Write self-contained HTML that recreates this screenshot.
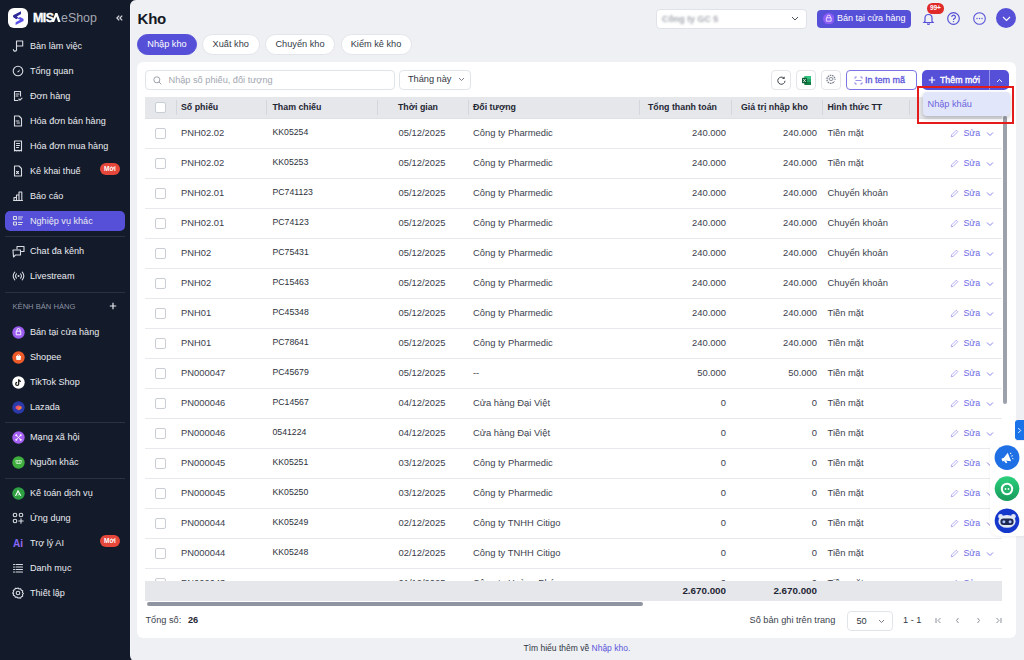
<!DOCTYPE html>
<html><head><meta charset="utf-8"><style>
*{box-sizing:border-box;margin:0;padding:0}
svg{display:block}
html,body{width:1024px;height:660px;overflow:hidden;background:#131a29;font-family:"Liberation Sans", sans-serif;}
.a{position:absolute;white-space:nowrap}
.nav{position:absolute;left:0;width:130px;height:20px;}
.nav .ic{position:absolute;left:12px;top:4.6px;width:13px;height:13px}
.nav .t{position:absolute;left:30px;top:0.7px;line-height:20px;font-size:9.1px;color:#e9ebf0}
.sep{position:absolute;left:5px;width:120px;height:1px;background:#2a3142}
.badge{position:absolute;left:100px;width:20px;height:12px;border-radius:6px;background:#e5483a;color:#fff;font-size:6.5px;font-weight:700;text-align:center;line-height:12px}
.main{position:absolute;left:130px;top:0;width:894px;height:663px;background:#eef0f4;border-radius:6px 0 0 8px;border-left:1px solid #f5f6fa}
.pill{position:absolute;top:34px;height:21px;border-radius:10.5px;background:#fff;border:1px solid #e3e5ea;font-size:9.2px;color:#333a46;text-align:center;line-height:18.4px}
.card{position:absolute;left:137px;top:62px;width:879px;height:576px;background:#fff;border-radius:6px}
.ibtn{position:absolute;top:70px;width:19.5px;height:19.5px;border:1px solid #e3e5ea;border-radius:4px;background:#fff}
.hd{position:absolute;top:97px;height:21px;font-size:8.8px;font-weight:700;color:#1f2633;line-height:21px}
.vs{position:absolute;top:100px;width:1px;height:15px;background:#d3d6dc}
.row{position:absolute;left:145px;width:857px;height:30px;border-bottom:1px solid #e7e9ed}
.c{position:absolute;top:0;line-height:28px;font-size:9.4px;color:#3b414d}
.cb{position:absolute;left:10px;top:9.3px;width:10.5px;height:10.5px;border:1px solid #c9cdd4;border-radius:2px;background:#fff}
.r{text-align:right}
</style></head><body>

<div class="a" style="left:8px;top:8px;width:20px;height:20px;border-radius:6px;background:#fff">
<svg width="20" height="20" viewBox="0 0 20 20"><path d="M13,3.3 L13,6 L8.8,8.6 L10.4,9.8 L8.3,11.2 L5,9.1 L5.2,7.3 Z" fill="#2f2a9a"/><path d="M9.4,10.4 L12.1,8.9 L15.6,11 L15.5,12.9 L7.6,16.9 L7.6,14.3 L12.3,11.8 Z" fill="#5a52e8"/></svg></div>
<div class="a" style="left:33px;top:11px;font-size:12.4px;font-weight:700;color:#fff;line-height:14px;letter-spacing:-0.5px;-webkit-text-stroke:0.35px #fff">MIS</div>
<svg class="a" style="left:51.8px;top:13.2px" width="9" height="9" viewBox="0 0 9 9"><path d="M0 9L3.3 0h2.1L8.6 9H6.1L4.3 3.6 2.1 9z" fill="#fff"/></svg>
<div class="a" style="left:61px;top:11px;font-size:12.4px;color:#a3a8b2;line-height:14px;letter-spacing:0px">eShop</div>
<svg class="a" style="left:116px;top:15.3px" width="7" height="6" viewBox="0 0 7 6"><path d="M3.2 .6L.9 3l2.3 2.4M6.2 .6L3.9 3l2.3 2.4" fill="none" stroke="#d3d6dd" stroke-width="1.25"/></svg>
<div class="nav" style="top:35px"><div class="ic"><svg width="12" height="12" viewBox="0 0 12 12"><path d="M4.5 9V1h6.2v5H4.5" stroke="#d9dce3" stroke-width="1.1" fill="none" stroke-linecap="round" stroke-linejoin="round"/><path d="M4.5 9a1.6 1.6 0 1 1-3.1.5" stroke="#d9dce3" stroke-width="1.1" fill="none" stroke-linecap="round" stroke-linejoin="round"/></svg></div><div class="t">Bàn làm việc</div></div>
<div class="nav" style="top:60px"><div class="ic"><svg width="12" height="12" viewBox="0 0 12 12"><circle cx="6" cy="6" r="4.8" stroke="#d9dce3" stroke-width="1.1" fill="none" stroke-linecap="round" stroke-linejoin="round"/><path d="M4.9 7.3L8 4.2 7 7z" fill="#d9dce3"/></svg></div><div class="t">Tổng quan</div></div>
<div class="nav" style="top:85px"><div class="ic"><svg width="12" height="12" viewBox="0 0 12 12"><path d="M6 10.5H2.5v-9h6v4.5" stroke="#d9dce3" stroke-width="1.1" fill="none" stroke-linecap="round" stroke-linejoin="round"/><path d="M4 4h3M4 6h2" stroke="#d9dce3" stroke-width="1.1" fill="none" stroke-linecap="round" stroke-linejoin="round"/><path d="M6.8 9l1.2 1.2 2-2" stroke="#d9dce3" stroke-width="1.1" fill="none" stroke-linecap="round" stroke-linejoin="round"/></svg></div><div class="t">Đơn hàng</div></div>
<div class="nav" style="top:110px"><div class="ic"><svg width="12" height="12" viewBox="0 0 12 12"><path d="M2.5 1h4.5l2.5 2.5v7.5h-7z" stroke="#d9dce3" stroke-width="1.1" fill="none" stroke-linecap="round" stroke-linejoin="round"/><path d="M4 6h3M5 8h2.5" stroke="#d9dce3" stroke-width="1.1" fill="none" stroke-linecap="round" stroke-linejoin="round"/></svg></div><div class="t">Hóa đơn bán hàng</div></div>
<div class="nav" style="top:135px"><div class="ic"><svg width="12" height="12" viewBox="0 0 12 12"><path d="M2.5 1h7v10l-1.2-.8-1.2.8-1.1-.8-1.2.8-1.1-.8-1.2.8z" stroke="#d9dce3" stroke-width="1.1" fill="none" stroke-linecap="round" stroke-linejoin="round"/><path d="M4.5 3.5h3M4.5 5.5h3M4.5 7.5h2" stroke="#d9dce3" stroke-width="1.1" fill="none" stroke-linecap="round" stroke-linejoin="round"/></svg></div><div class="t">Hóa đơn mua hàng</div></div>
<div class="nav" style="top:160px"><div class="ic"><svg width="12" height="12" viewBox="0 0 12 12"><path d="M2.5 1h4.5l2.5 2.5v7.5h-7z" stroke="#d9dce3" stroke-width="1.1" fill="none" stroke-linecap="round" stroke-linejoin="round"/><path d="M4.5 6.5l2 2M6.5 6.5l-2 2" stroke="#d9dce3" stroke-width="1.1" fill="none" stroke-linecap="round" stroke-linejoin="round"/></svg></div><div class="t">Kê khai thuế</div></div>
<div class="badge" style="top:162.5px">Mới</div>
<div class="nav" style="top:185px"><div class="ic"><svg width="12" height="12" viewBox="0 0 12 12"><path d="M1.5 10.5h9M2 10.5V7.5h2.5v3M4.5 10.5V5h2.5v5.5M7 10.5V2h2.8v8.5" stroke="#d9dce3" stroke-width="1.1" fill="none" stroke-linecap="round" stroke-linejoin="round"/></svg></div><div class="t">Báo cáo</div></div>
<div class="a" style="left:5px;top:211px;width:120px;height:20px;border-radius:5px;background:#5650d8"></div>
<div class="nav" style="top:210px"><div class="ic"><svg width="12" height="12" viewBox="0 0 12 12"><rect x="1.5" y="1.5" width="3" height="3" rx=".5" stroke="#d9dce3" stroke-width="1.1" fill="none" stroke-linecap="round" stroke-linejoin="round"/><rect x="1.5" y="7" width="3" height="3" rx=".5" stroke="#d9dce3" stroke-width="1.1" fill="none" stroke-linecap="round" stroke-linejoin="round"/><path d="M6.5 2h4M6.5 4h3M6.5 7.5h4M6.5 9.5h3" stroke="#d9dce3" stroke-width="1.1" fill="none" stroke-linecap="round" stroke-linejoin="round"/></svg></div><div class="t">Nghiệp vụ khác</div></div>
<div class="nav" style="top:240px"><div class="ic"><svg width="13" height="13" viewBox="0 0 13 13"><path d="M5 4V1.5h7v5H9.5" stroke="#d9dce3" stroke-width="1.1" fill="none" stroke-linecap="round" stroke-linejoin="round"/><path d="M1 5h7.5v5h-5l-2 2z" stroke="#d9dce3" stroke-width="1.1" fill="none" stroke-linecap="round" stroke-linejoin="round"/></svg></div><div class="t">Chat đa kênh</div></div>
<div class="nav" style="top:265px"><div class="ic"><svg width="13" height="12" viewBox="0 0 13 12"><circle cx="6.5" cy="6" r="1" fill="#d9dce3"/><path d="M4.5 3.8a3 3 0 0 0 0 4.4M8.5 3.8a3 3 0 0 1 0 4.4M2.8 2.2a5.3 5.3 0 0 0 0 7.6M10.2 2.2a5.3 5.3 0 0 1 0 7.6" stroke="#d9dce3" stroke-width="1.1" fill="none" stroke-linecap="round" stroke-linejoin="round"/></svg></div><div class="t">Livestream</div></div>
<div class="nav" style="top:321px"><div class="ic"><svg width="13" height="13" viewBox="0 0 13 13"><circle cx="6.5" cy="6.5" r="6.2" fill="#9b5cf0"/><path d="M4.2 5.2h4.6v3.6H4.2z" fill="none" stroke="#fff" stroke-width=".9"/><path d="M5 5.2V4a1.5 1.5 0 0 1 3 0v1.2" fill="none" stroke="#fff" stroke-width=".9"/></svg></div><div class="t">Bán tại cửa hàng</div></div>
<div class="nav" style="top:346px"><div class="ic"><svg width="13" height="13" viewBox="0 0 13 13"><circle cx="6.5" cy="6.5" r="6.2" fill="#ee5a2a"/><path d="M4 5h5l-.4 4H4.4z" fill="#fff"/><path d="M5.3 5a1.2 1.2 0 0 1 2.4 0" fill="none" stroke="#fff" stroke-width=".8"/></svg></div><div class="t">Shopee</div></div>
<div class="nav" style="top:371px"><div class="ic"><svg width="13" height="13" viewBox="0 0 13 13"><circle cx="6.5" cy="6.5" r="6.2" fill="#ffffff"/><path d="M7.3 3.2c.2.9.8 1.5 1.7 1.6v1.2c-.6 0-1.2-.2-1.7-.5v2.4a2.1 2.1 0 1 1-2.1-2.1v1.2a.9.9 0 1 0 .9.9V3.2z" fill="#111"/></svg></div><div class="t">TikTok Shop</div></div>
<div class="nav" style="top:396px"><div class="ic"><svg width="13" height="13" viewBox="0 0 13 13"><circle cx="6.5" cy="6.5" r="6.2" fill="#2b3aa8"/><path d="M3.6 5.6l2.9-1.4 2.9 1.4v1.8L6.5 9.2 3.6 7.4z" fill="#f0566a"/><path d="M6.5 6.5l2.9-.9v1.8L6.5 9.2z" fill="#fa8a2e"/></svg></div><div class="t">Lazada</div></div>
<div class="nav" style="top:426px"><div class="ic"><svg width="13" height="13" viewBox="0 0 13 13"><circle cx="6.5" cy="6.5" r="6.2" fill="#a35ef2"/><circle cx="4.3" cy="4.3" r="1" fill="#fff"/><circle cx="8.7" cy="4.3" r="1" fill="#fff"/><circle cx="4.3" cy="8.7" r="1" fill="#fff"/><circle cx="8.7" cy="8.7" r="1" fill="#fff"/><path d="M4.3 4.3l4.4 4.4M8.7 4.3L4.3 8.7" stroke="#fff" stroke-width=".8"/></svg></div><div class="t">Mạng xã hội</div></div>
<div class="nav" style="top:451px"><div class="ic"><svg width="13" height="13" viewBox="0 0 13 13"><circle cx="6.5" cy="6.5" r="6.2" fill="#3fae3f"/><path d="M3.8 4.5h5.6l-.6 3H4.4z" fill="none" stroke="#bfeabf" stroke-width=".9"/><path d="M5.6 4.5v3M7.4 4.5v3" stroke="#bfeabf" stroke-width=".7"/></svg></div><div class="t">Nguồn khác</div></div>
<div class="nav" style="top:482px"><div class="ic"><svg width="13" height="13" viewBox="0 0 13 13"><circle cx="6.5" cy="6.5" r="6.2" fill="#2ea043"/><path d="M3.5 9l2.5-5 2.5 4.2" fill="none" stroke="#fff" stroke-width="1.1"/><path d="M6 8.5l1.3-1.5 1.8 2" fill="none" stroke="#d8f5d8" stroke-width="1"/></svg></div><div class="t">Kế toán dịch vụ</div></div>
<div class="nav" style="top:507px"><div class="ic"><svg width="12" height="12" viewBox="0 0 12 12"><circle cx="3" cy="3" r="1.8" stroke="#d9dce3" stroke-width="1.1" fill="none" stroke-linecap="round" stroke-linejoin="round"/><circle cx="9" cy="3" r="1.8" stroke="#d9dce3" stroke-width="1.1" fill="none" stroke-linecap="round" stroke-linejoin="round"/><circle cx="3" cy="9" r="1.8" stroke="#d9dce3" stroke-width="1.1" fill="none" stroke-linecap="round" stroke-linejoin="round"/><path d="M9 6.8v4.4M6.8 9h4.4" stroke="#d9dce3" stroke-width="1.1" fill="none" stroke-linecap="round" stroke-linejoin="round"/></svg></div><div class="t">Ứng dụng</div></div>
<div class="nav" style="top:532px"><div class="ic"><svg width="14" height="12" viewBox="0 0 14 12"><defs><linearGradient id="aig" x1="0" x2="1" y1="0" y2="1"><stop offset="0" stop-color="#5d5ff0"/><stop offset="1" stop-color="#b070f5"/></linearGradient></defs><text x="1" y="9.6" font-family="Liberation Sans" font-weight="700" font-size="10" fill="url(#aig)">Ai</text></svg></div><div class="t">Trợ lý AI</div></div>
<div class="badge" style="top:534.5px">Mới</div>
<div class="nav" style="top:557px"><div class="ic"><svg width="12" height="12" viewBox="0 0 12 12"><path d="M1.5 2.5h1M4 2.5h6.5M1.5 5h1M4 5h6.5M1.5 7.5h1M4 7.5h6.5M1.5 10h1M4 10h6.5" stroke="#d9dce3" stroke-width="1.1" fill="none" stroke-linecap="round" stroke-linejoin="round"/></svg></div><div class="t">Danh mục</div></div>
<div class="nav" style="top:582px"><div class="ic"><svg width="12" height="12" viewBox="0 0 12 12"><path d="M6 1l1.2 1 1.5-.3.5 1.5 1.5.6-.3 1.5 1 1.2-1 1.2.3 1.5-1.5.5-.5 1.5-1.5-.3L6 11l-1.2-1-1.5.3-.5-1.5-1.5-.5.3-1.5L.6 6l1-1.2-.3-1.5 1.5-.6.5-1.5 1.5.3z" stroke="#d9dce3" stroke-width="1.1" fill="none" stroke-linecap="round" stroke-linejoin="round"/><circle cx="6" cy="6" r="1.8" stroke="#d9dce3" stroke-width="1.1" fill="none" stroke-linecap="round" stroke-linejoin="round"/></svg></div><div class="t">Thiết lập</div></div>
<div class="sep" style="top:236px"></div>
<div class="sep" style="top:291.5px"></div>
<div class="sep" style="top:421.5px"></div>
<div class="sep" style="top:477.5px"></div>
<div class="a" style="left:12.5px;top:302px;font-size:7.6px;color:#8c93a3;line-height:10px">KÊNH BÁN HÀNG</div>
<svg class="a" style="left:109px;top:302px" width="8" height="8" viewBox="0 0 8 8"><path d="M4 .8v6.4M.8 4h6.4" stroke="#e6e8ee" stroke-width="1.2"/></svg>
<div class="main"></div>
<div class="a" style="left:137.5px;top:8.5px;font-size:15px;font-weight:700;color:#141824;line-height:20px;letter-spacing:-0.2px">Kho</div>
<div class="pill" style="left:137px;width:60px;background:#5650d8;border-color:#5650d8;color:#fff">Nhập kho</div>
<div class="pill" style="left:202px;width:57.5px">Xuất kho</div>
<div class="pill" style="left:265px;width:70px">Chuyển kho</div>
<div class="pill" style="left:340.5px;width:71px">Kiểm kê kho</div>
<div class="a" style="left:655.5px;top:8.5px;width:151px;height:20px;border:1px solid #dfe2e8;border-radius:4px;background:#fff"></div>
<div class="a" style="left:662px;top:9.5px;font-size:8.9px;line-height:18px;color:#a4a8b0;filter:blur(1.3px);font-weight:700;letter-spacing:0px">Công ty GC 5</div>
<svg class="a" style="left:791px;top:16px" width="8" height="5" viewBox="0 0 8 5"><path d="M1 1l3 3 3-3" stroke="#4a505c" stroke-width="1" fill="none"/></svg>
<div class="a" style="left:817px;top:9.5px;width:94px;height:18px;border-radius:4px;background:#5650d8"></div>
<svg class="a" style="left:822.5px;top:12.7px" width="11.5" height="11.5" viewBox="0 0 12 12"><circle cx="6" cy="6" r="6" fill="#8b5cf6"/><path d="M3.5 5h5v3.5h-5z M4.3 5V4a1.7 1.7 0 0 1 3.4 0v1" fill="none" stroke="#fff" stroke-width=".8"/></svg>
<div class="a" style="left:837px;top:9.5px;font-size:9.0px;color:#fff;line-height:17px">Bán tại cửa hàng</div>
<svg class="a" style="left:922px;top:12px" width="13" height="13" viewBox="0 0 13 13"><path d="M3 9.5V6a3.5 3.5 0 0 1 7 0v3.5l1 1H2z" fill="none" stroke="#5650d8" stroke-width="1.2"/><path d="M5.3 11.5a1.3 1.3 0 0 0 2.4 0" stroke="#5650d8" stroke-width="1.2" fill="none"/></svg>
<div class="a" style="left:927px;top:3px;width:16.5px;height:10.5px;border-radius:5.25px;background:#e02a2a;color:#fff;font-size:6.6px;font-weight:700;text-align:center;line-height:10.5px;letter-spacing:-0.2px">99+</div>
<svg class="a" style="left:947px;top:12px" width="13" height="13" viewBox="0 0 13 13"><circle cx="6.5" cy="6.5" r="5.8" fill="none" stroke="#5650d8" stroke-width="1.2"/><path d="M4.8 5a1.8 1.8 0 1 1 2.4 1.7c-.5.2-.7.5-.7 1v.3" fill="none" stroke="#5650d8" stroke-width="1.2"/><circle cx="6.5" cy="9.6" r=".7" fill="#5650d8"/></svg>
<svg class="a" style="left:972.5px;top:12px" width="13" height="13" viewBox="0 0 13 13"><circle cx="6.5" cy="6.5" r="5.8" fill="none" stroke="#5650d8" stroke-width="1.1"/><circle cx="4" cy="6.5" r=".7" fill="#5650d8"/><circle cx="6.5" cy="6.5" r=".7" fill="#5650d8"/><circle cx="9" cy="6.5" r=".7" fill="#5650d8"/></svg>
<div class="a" style="left:996px;top:8.3px;width:20px;height:20px;border-radius:50%;background:#5650d8"></div>
<svg class="a" style="left:1001.5px;top:15.5px" width="9" height="6" viewBox="0 0 9 6"><path d="M1 1l3.5 3.5L8 1" stroke="#fff" stroke-width="1.1" fill="none"/></svg>
<div class="card"></div>
<div class="a" style="left:145px;top:70px;width:249.5px;height:20px;border:1px solid #e1e4e9;border-radius:4px;background:#fff"></div>
<svg class="a" style="left:152.5px;top:75.5px" width="9" height="9" viewBox="0 0 9 9"><circle cx="3.8" cy="3.8" r="3" fill="none" stroke="#9aa0aa" stroke-width="1"/><path d="M6 6l2.3 2.3" stroke="#9aa0aa" stroke-width="1"/></svg>
<div class="a" style="left:168.5px;top:69.5px;font-size:9.2px;color:#a2a7b0;line-height:20px">Nhập số phiếu, đối tượng</div>
<div class="a" style="left:399px;top:69.5px;width:71.5px;height:20px;border:1px solid #e1e4e9;border-radius:4px;background:#fff"></div>
<div class="a" style="left:408px;top:68.7px;font-size:9.2px;color:#2f3541;line-height:20px">Tháng này</div>
<svg class="a" style="left:457.5px;top:76.5px" width="7" height="5" viewBox="0 0 7 5"><path d="M1 1l2.5 2.5L6 1" stroke="#6b717c" stroke-width=".9" fill="none"/></svg>
<div class="ibtn" style="left:771px"></div>
<svg class="a" style="left:775.5px;top:74.5px" width="11" height="11" viewBox="0 0 11 11"><path d="M9 5.8A3.6 3.6 0 1 1 7.9 3.1" fill="none" stroke="#3e434d" stroke-width="1"/><path d="M8.6 1.4L8.7 4.1 6 3.8z" fill="#3e434d"/></svg>
<div class="ibtn" style="left:796px"></div>
<svg class="a" style="left:800.5px;top:74.5px" width="11" height="11" viewBox="0 0 11 11"><rect x="3.5" y="1" width="6.5" height="9" rx=".8" fill="#21a366"/><rect x="3.5" y="1" width="6.5" height="3" fill="#33c481"/><rect x="3.5" y="7" width="6.5" height="3" fill="#107c41"/><rect x="1" y="2.8" width="5" height="5.4" rx=".6" fill="#0b5e34"/><path d="M2.3 4l2.4 3M4.7 4L2.3 7" stroke="#fff" stroke-width=".8"/></svg>
<div class="ibtn" style="left:821px"></div>
<svg class="a" style="left:825.8px;top:74.3px" width="10" height="10" viewBox="0 0 10 10"><path d="M7.6 8.3A4 4 0 1 1 8.9 5.8" fill="none" stroke="#7d838e" stroke-width="1.3" stroke-dasharray="1.6 .7"/><ellipse cx="5" cy="5" rx="2" ry="1.5" fill="none" stroke="#7d838e" stroke-width=".9"/><path d="M7 8.6l1.6-1.2" stroke="#7d838e" stroke-width=".9"/></svg>
<div class="a" style="left:846px;top:70px;width:70.5px;height:20px;border:1px solid #7b76e6;border-radius:4px;background:#fff"></div>
<svg class="a" style="left:854px;top:75.5px" width="9" height="9" viewBox="0 0 9 9"><path d="M1 2.8V1h1.8M6.2 1H8v1.8M8 6.2V8H6.2M2.8 8H1V6.2M1.5 4.5h6" fill="none" stroke="#7a74e4" stroke-width=".8"/></svg>
<div class="a" style="left:865px;top:70px;font-size:9px;font-weight:400;-webkit-text-stroke:0.3px #5b55da;color:#5b55da;line-height:20px">In tem mã</div>
<div class="a" style="left:922px;top:70px;width:86.5px;height:20px;border-radius:5px;background:#5650d8"></div>
<div class="a" style="left:989px;top:70px;width:1.2px;height:20px;background:#9893ec"></div>
<svg class="a" style="left:927.5px;top:76px" width="8" height="8" viewBox="0 0 8 8"><path d="M4 .8v6.4M.8 4h6.4" stroke="#fff" stroke-width="1.2"/></svg>
<div class="a" style="left:940px;top:70px;font-size:8.8px;font-weight:400;-webkit-text-stroke:0.35px #fff;color:#fff;line-height:20px">Thêm mới</div>
<svg class="a" style="left:995.5px;top:77.5px" width="7" height="5" viewBox="0 0 7 5"><path d="M1 4l2.5-2.5L6 4" stroke="#fff" stroke-width=".9" fill="none"/></svg>
<div class="a" style="left:145px;top:97px;width:857px;height:22px;background:#e5e7eb;border-bottom:1px solid #dfe1e6"></div>
<div class="cb" style="left:155px;top:102px;position:absolute"></div>
<div class="vs" style="left:175.5px"></div>
<div class="vs" style="left:266px"></div>
<div class="vs" style="left:376.5px"></div>
<div class="vs" style="left:467.5px"></div>
<div class="vs" style="left:639px"></div>
<div class="vs" style="left:731px"></div>
<div class="vs" style="left:821.5px"></div>
<div class="vs" style="left:908.5px"></div>
<div class="hd" style="left:181px">Số phiếu</div>
<div class="hd" style="left:272.5px">Tham chiếu</div>
<div class="hd" style="left:398px">Thời gian</div>
<div class="hd" style="left:473px">Đối tượng</div>
<div class="hd" style="left:648px">Tổng thanh toán</div>
<div class="hd" style="left:741px">Giá trị nhập kho</div>
<div class="hd" style="left:827.5px">Hình thức TT</div>
<div class="a" style="left:137px;top:119px;width:879px;height:462px;overflow:hidden">
<div class="row" style="left:8px;top:0px">
<div class="cb"></div>
<div class="c" style="left:36px">PNH02.02</div>
<div class="c" style="left:127.5px;top:-1px;font-size:8.7px;color:#2c313b">KK05254</div>
<div class="c" style="left:231.5px;width:91px;text-align:center;font-size:9.4px">05/12/2025</div>
<div class="c" style="left:328px">Công ty Pharmedic</div>
<div class="c r" style="left:480px;width:101px">240.000</div>
<div class="c r" style="left:572px;width:100px">240.000</div>
<div class="c" style="left:682.5px">Tiền mặt</div>
<div class="a" style="left:804.5px;top:9.5px"><svg width="9" height="9" viewBox="0 0 9 9"><path d="M6.3 1.2l1.5 1.5-4.6 4.6-2 .5.5-2z" fill="none" stroke="#9f9bf0" stroke-width=".8"/></svg></div>
<div class="c" style="left:818.5px;color:#6b66e3;font-size:8.8px">Sửa</div>
<svg class="a" style="left:840.5px;top:11.5px" width="8" height="6" viewBox="0 0 8 6"><path d="M1 1.5l3 3 3-3" stroke="#8884ea" stroke-width="1" fill="none"/></svg>
</div>
<div class="row" style="left:8px;top:30px">
<div class="cb"></div>
<div class="c" style="left:36px">PNH02.02</div>
<div class="c" style="left:127.5px;top:-1px;font-size:8.7px;color:#2c313b">KK05253</div>
<div class="c" style="left:231.5px;width:91px;text-align:center;font-size:9.4px">05/12/2025</div>
<div class="c" style="left:328px">Công ty Pharmedic</div>
<div class="c r" style="left:480px;width:101px">240.000</div>
<div class="c r" style="left:572px;width:100px">240.000</div>
<div class="c" style="left:682.5px">Tiền mặt</div>
<div class="a" style="left:804.5px;top:9.5px"><svg width="9" height="9" viewBox="0 0 9 9"><path d="M6.3 1.2l1.5 1.5-4.6 4.6-2 .5.5-2z" fill="none" stroke="#9f9bf0" stroke-width=".8"/></svg></div>
<div class="c" style="left:818.5px;color:#6b66e3;font-size:8.8px">Sửa</div>
<svg class="a" style="left:840.5px;top:11.5px" width="8" height="6" viewBox="0 0 8 6"><path d="M1 1.5l3 3 3-3" stroke="#8884ea" stroke-width="1" fill="none"/></svg>
</div>
<div class="row" style="left:8px;top:60px">
<div class="cb"></div>
<div class="c" style="left:36px">PNH02.01</div>
<div class="c" style="left:127.5px;top:-1px;font-size:8.7px;color:#2c313b">PC741123</div>
<div class="c" style="left:231.5px;width:91px;text-align:center;font-size:9.4px">05/12/2025</div>
<div class="c" style="left:328px">Công ty Pharmedic</div>
<div class="c r" style="left:480px;width:101px">240.000</div>
<div class="c r" style="left:572px;width:100px">240.000</div>
<div class="c" style="left:682.5px">Chuyển khoản</div>
<div class="a" style="left:804.5px;top:9.5px"><svg width="9" height="9" viewBox="0 0 9 9"><path d="M6.3 1.2l1.5 1.5-4.6 4.6-2 .5.5-2z" fill="none" stroke="#9f9bf0" stroke-width=".8"/></svg></div>
<div class="c" style="left:818.5px;color:#6b66e3;font-size:8.8px">Sửa</div>
<svg class="a" style="left:840.5px;top:11.5px" width="8" height="6" viewBox="0 0 8 6"><path d="M1 1.5l3 3 3-3" stroke="#8884ea" stroke-width="1" fill="none"/></svg>
</div>
<div class="row" style="left:8px;top:90px">
<div class="cb"></div>
<div class="c" style="left:36px">PNH02.01</div>
<div class="c" style="left:127.5px;top:-1px;font-size:8.7px;color:#2c313b">PC74123</div>
<div class="c" style="left:231.5px;width:91px;text-align:center;font-size:9.4px">05/12/2025</div>
<div class="c" style="left:328px">Công ty Pharmedic</div>
<div class="c r" style="left:480px;width:101px">240.000</div>
<div class="c r" style="left:572px;width:100px">240.000</div>
<div class="c" style="left:682.5px">Chuyển khoản</div>
<div class="a" style="left:804.5px;top:9.5px"><svg width="9" height="9" viewBox="0 0 9 9"><path d="M6.3 1.2l1.5 1.5-4.6 4.6-2 .5.5-2z" fill="none" stroke="#9f9bf0" stroke-width=".8"/></svg></div>
<div class="c" style="left:818.5px;color:#6b66e3;font-size:8.8px">Sửa</div>
<svg class="a" style="left:840.5px;top:11.5px" width="8" height="6" viewBox="0 0 8 6"><path d="M1 1.5l3 3 3-3" stroke="#8884ea" stroke-width="1" fill="none"/></svg>
</div>
<div class="row" style="left:8px;top:120px">
<div class="cb"></div>
<div class="c" style="left:36px">PNH02</div>
<div class="c" style="left:127.5px;top:-1px;font-size:8.7px;color:#2c313b">PC75431</div>
<div class="c" style="left:231.5px;width:91px;text-align:center;font-size:9.4px">05/12/2025</div>
<div class="c" style="left:328px">Công ty Pharmedic</div>
<div class="c r" style="left:480px;width:101px">240.000</div>
<div class="c r" style="left:572px;width:100px">240.000</div>
<div class="c" style="left:682.5px">Chuyển khoản</div>
<div class="a" style="left:804.5px;top:9.5px"><svg width="9" height="9" viewBox="0 0 9 9"><path d="M6.3 1.2l1.5 1.5-4.6 4.6-2 .5.5-2z" fill="none" stroke="#9f9bf0" stroke-width=".8"/></svg></div>
<div class="c" style="left:818.5px;color:#6b66e3;font-size:8.8px">Sửa</div>
<svg class="a" style="left:840.5px;top:11.5px" width="8" height="6" viewBox="0 0 8 6"><path d="M1 1.5l3 3 3-3" stroke="#8884ea" stroke-width="1" fill="none"/></svg>
</div>
<div class="row" style="left:8px;top:150px">
<div class="cb"></div>
<div class="c" style="left:36px">PNH02</div>
<div class="c" style="left:127.5px;top:-1px;font-size:8.7px;color:#2c313b">PC15463</div>
<div class="c" style="left:231.5px;width:91px;text-align:center;font-size:9.4px">05/12/2025</div>
<div class="c" style="left:328px">Công ty Pharmedic</div>
<div class="c r" style="left:480px;width:101px">240.000</div>
<div class="c r" style="left:572px;width:100px">240.000</div>
<div class="c" style="left:682.5px">Chuyển khoản</div>
<div class="a" style="left:804.5px;top:9.5px"><svg width="9" height="9" viewBox="0 0 9 9"><path d="M6.3 1.2l1.5 1.5-4.6 4.6-2 .5.5-2z" fill="none" stroke="#9f9bf0" stroke-width=".8"/></svg></div>
<div class="c" style="left:818.5px;color:#6b66e3;font-size:8.8px">Sửa</div>
<svg class="a" style="left:840.5px;top:11.5px" width="8" height="6" viewBox="0 0 8 6"><path d="M1 1.5l3 3 3-3" stroke="#8884ea" stroke-width="1" fill="none"/></svg>
</div>
<div class="row" style="left:8px;top:180px">
<div class="cb"></div>
<div class="c" style="left:36px">PNH01</div>
<div class="c" style="left:127.5px;top:-1px;font-size:8.7px;color:#2c313b">PC45348</div>
<div class="c" style="left:231.5px;width:91px;text-align:center;font-size:9.4px">05/12/2025</div>
<div class="c" style="left:328px">Công ty Pharmedic</div>
<div class="c r" style="left:480px;width:101px">240.000</div>
<div class="c r" style="left:572px;width:100px">240.000</div>
<div class="c" style="left:682.5px">Tiền mặt</div>
<div class="a" style="left:804.5px;top:9.5px"><svg width="9" height="9" viewBox="0 0 9 9"><path d="M6.3 1.2l1.5 1.5-4.6 4.6-2 .5.5-2z" fill="none" stroke="#9f9bf0" stroke-width=".8"/></svg></div>
<div class="c" style="left:818.5px;color:#6b66e3;font-size:8.8px">Sửa</div>
<svg class="a" style="left:840.5px;top:11.5px" width="8" height="6" viewBox="0 0 8 6"><path d="M1 1.5l3 3 3-3" stroke="#8884ea" stroke-width="1" fill="none"/></svg>
</div>
<div class="row" style="left:8px;top:210px">
<div class="cb"></div>
<div class="c" style="left:36px">PNH01</div>
<div class="c" style="left:127.5px;top:-1px;font-size:8.7px;color:#2c313b">PC78641</div>
<div class="c" style="left:231.5px;width:91px;text-align:center;font-size:9.4px">05/12/2025</div>
<div class="c" style="left:328px">Công ty Pharmedic</div>
<div class="c r" style="left:480px;width:101px">240.000</div>
<div class="c r" style="left:572px;width:100px">240.000</div>
<div class="c" style="left:682.5px">Tiền mặt</div>
<div class="a" style="left:804.5px;top:9.5px"><svg width="9" height="9" viewBox="0 0 9 9"><path d="M6.3 1.2l1.5 1.5-4.6 4.6-2 .5.5-2z" fill="none" stroke="#9f9bf0" stroke-width=".8"/></svg></div>
<div class="c" style="left:818.5px;color:#6b66e3;font-size:8.8px">Sửa</div>
<svg class="a" style="left:840.5px;top:11.5px" width="8" height="6" viewBox="0 0 8 6"><path d="M1 1.5l3 3 3-3" stroke="#8884ea" stroke-width="1" fill="none"/></svg>
</div>
<div class="row" style="left:8px;top:240px">
<div class="cb"></div>
<div class="c" style="left:36px">PN000047</div>
<div class="c" style="left:127.5px;top:-1px;font-size:8.7px;color:#2c313b">PC45679</div>
<div class="c" style="left:231.5px;width:91px;text-align:center;font-size:9.4px">05/12/2025</div>
<div class="c" style="left:328px">--</div>
<div class="c r" style="left:480px;width:101px">50.000</div>
<div class="c r" style="left:572px;width:100px">50.000</div>
<div class="c" style="left:682.5px">Tiền mặt</div>
<div class="a" style="left:804.5px;top:9.5px"><svg width="9" height="9" viewBox="0 0 9 9"><path d="M6.3 1.2l1.5 1.5-4.6 4.6-2 .5.5-2z" fill="none" stroke="#9f9bf0" stroke-width=".8"/></svg></div>
<div class="c" style="left:818.5px;color:#6b66e3;font-size:8.8px">Sửa</div>
<svg class="a" style="left:840.5px;top:11.5px" width="8" height="6" viewBox="0 0 8 6"><path d="M1 1.5l3 3 3-3" stroke="#8884ea" stroke-width="1" fill="none"/></svg>
</div>
<div class="row" style="left:8px;top:270px">
<div class="cb"></div>
<div class="c" style="left:36px">PN000046</div>
<div class="c" style="left:127.5px;top:-1px;font-size:8.7px;color:#2c313b">PC14567</div>
<div class="c" style="left:231.5px;width:91px;text-align:center;font-size:9.4px">04/12/2025</div>
<div class="c" style="left:328px">Cửa hàng Đại Việt</div>
<div class="c r" style="left:480px;width:101px">0</div>
<div class="c r" style="left:572px;width:100px">0</div>
<div class="c" style="left:682.5px">Tiền mặt</div>
<div class="a" style="left:804.5px;top:9.5px"><svg width="9" height="9" viewBox="0 0 9 9"><path d="M6.3 1.2l1.5 1.5-4.6 4.6-2 .5.5-2z" fill="none" stroke="#9f9bf0" stroke-width=".8"/></svg></div>
<div class="c" style="left:818.5px;color:#6b66e3;font-size:8.8px">Sửa</div>
<svg class="a" style="left:840.5px;top:11.5px" width="8" height="6" viewBox="0 0 8 6"><path d="M1 1.5l3 3 3-3" stroke="#8884ea" stroke-width="1" fill="none"/></svg>
</div>
<div class="row" style="left:8px;top:300px">
<div class="cb"></div>
<div class="c" style="left:36px">PN000046</div>
<div class="c" style="left:127.5px;top:-1px;font-size:8.7px;color:#2c313b">0541224</div>
<div class="c" style="left:231.5px;width:91px;text-align:center;font-size:9.4px">04/12/2025</div>
<div class="c" style="left:328px">Cửa hàng Đại Việt</div>
<div class="c r" style="left:480px;width:101px">0</div>
<div class="c r" style="left:572px;width:100px">0</div>
<div class="c" style="left:682.5px">Tiền mặt</div>
<div class="a" style="left:804.5px;top:9.5px"><svg width="9" height="9" viewBox="0 0 9 9"><path d="M6.3 1.2l1.5 1.5-4.6 4.6-2 .5.5-2z" fill="none" stroke="#9f9bf0" stroke-width=".8"/></svg></div>
<div class="c" style="left:818.5px;color:#6b66e3;font-size:8.8px">Sửa</div>
<svg class="a" style="left:840.5px;top:11.5px" width="8" height="6" viewBox="0 0 8 6"><path d="M1 1.5l3 3 3-3" stroke="#8884ea" stroke-width="1" fill="none"/></svg>
</div>
<div class="row" style="left:8px;top:330px">
<div class="cb"></div>
<div class="c" style="left:36px">PN000045</div>
<div class="c" style="left:127.5px;top:-1px;font-size:8.7px;color:#2c313b">KK05251</div>
<div class="c" style="left:231.5px;width:91px;text-align:center;font-size:9.4px">03/12/2025</div>
<div class="c" style="left:328px">Công ty Pharmedic</div>
<div class="c r" style="left:480px;width:101px">0</div>
<div class="c r" style="left:572px;width:100px">0</div>
<div class="c" style="left:682.5px">Tiền mặt</div>
<div class="a" style="left:804.5px;top:9.5px"><svg width="9" height="9" viewBox="0 0 9 9"><path d="M6.3 1.2l1.5 1.5-4.6 4.6-2 .5.5-2z" fill="none" stroke="#9f9bf0" stroke-width=".8"/></svg></div>
<div class="c" style="left:818.5px;color:#6b66e3;font-size:8.8px">Sửa</div>
<svg class="a" style="left:840.5px;top:11.5px" width="8" height="6" viewBox="0 0 8 6"><path d="M1 1.5l3 3 3-3" stroke="#8884ea" stroke-width="1" fill="none"/></svg>
</div>
<div class="row" style="left:8px;top:360px">
<div class="cb"></div>
<div class="c" style="left:36px">PN000045</div>
<div class="c" style="left:127.5px;top:-1px;font-size:8.7px;color:#2c313b">KK05250</div>
<div class="c" style="left:231.5px;width:91px;text-align:center;font-size:9.4px">03/12/2025</div>
<div class="c" style="left:328px">Công ty Pharmedic</div>
<div class="c r" style="left:480px;width:101px">0</div>
<div class="c r" style="left:572px;width:100px">0</div>
<div class="c" style="left:682.5px">Tiền mặt</div>
<div class="a" style="left:804.5px;top:9.5px"><svg width="9" height="9" viewBox="0 0 9 9"><path d="M6.3 1.2l1.5 1.5-4.6 4.6-2 .5.5-2z" fill="none" stroke="#9f9bf0" stroke-width=".8"/></svg></div>
<div class="c" style="left:818.5px;color:#6b66e3;font-size:8.8px">Sửa</div>
<svg class="a" style="left:840.5px;top:11.5px" width="8" height="6" viewBox="0 0 8 6"><path d="M1 1.5l3 3 3-3" stroke="#8884ea" stroke-width="1" fill="none"/></svg>
</div>
<div class="row" style="left:8px;top:390px">
<div class="cb"></div>
<div class="c" style="left:36px">PN000044</div>
<div class="c" style="left:127.5px;top:-1px;font-size:8.7px;color:#2c313b">KK05249</div>
<div class="c" style="left:231.5px;width:91px;text-align:center;font-size:9.4px">02/12/2025</div>
<div class="c" style="left:328px">Công ty TNHH Citigo</div>
<div class="c r" style="left:480px;width:101px">0</div>
<div class="c r" style="left:572px;width:100px">0</div>
<div class="c" style="left:682.5px">Tiền mặt</div>
<div class="a" style="left:804.5px;top:9.5px"><svg width="9" height="9" viewBox="0 0 9 9"><path d="M6.3 1.2l1.5 1.5-4.6 4.6-2 .5.5-2z" fill="none" stroke="#9f9bf0" stroke-width=".8"/></svg></div>
<div class="c" style="left:818.5px;color:#6b66e3;font-size:8.8px">Sửa</div>
<svg class="a" style="left:840.5px;top:11.5px" width="8" height="6" viewBox="0 0 8 6"><path d="M1 1.5l3 3 3-3" stroke="#8884ea" stroke-width="1" fill="none"/></svg>
</div>
<div class="row" style="left:8px;top:420px">
<div class="cb"></div>
<div class="c" style="left:36px">PN000044</div>
<div class="c" style="left:127.5px;top:-1px;font-size:8.7px;color:#2c313b">KK05248</div>
<div class="c" style="left:231.5px;width:91px;text-align:center;font-size:9.4px">02/12/2025</div>
<div class="c" style="left:328px">Công ty TNHH Citigo</div>
<div class="c r" style="left:480px;width:101px">0</div>
<div class="c r" style="left:572px;width:100px">0</div>
<div class="c" style="left:682.5px">Tiền mặt</div>
<div class="a" style="left:804.5px;top:9.5px"><svg width="9" height="9" viewBox="0 0 9 9"><path d="M6.3 1.2l1.5 1.5-4.6 4.6-2 .5.5-2z" fill="none" stroke="#9f9bf0" stroke-width=".8"/></svg></div>
<div class="c" style="left:818.5px;color:#6b66e3;font-size:8.8px">Sửa</div>
<svg class="a" style="left:840.5px;top:11.5px" width="8" height="6" viewBox="0 0 8 6"><path d="M1 1.5l3 3 3-3" stroke="#8884ea" stroke-width="1" fill="none"/></svg>
</div>
<div class="row" style="left:8px;top:450px">
<div class="cb"></div>
<div class="c" style="left:36px">PN000043</div>
<div class="c" style="left:127.5px;top:-1px;font-size:8.7px;color:#2c313b"></div>
<div class="c" style="left:231.5px;width:91px;text-align:center;font-size:9.4px">01/12/2025</div>
<div class="c" style="left:328px">Công ty Hoàng Phúc</div>
<div class="c r" style="left:480px;width:101px">0</div>
<div class="c r" style="left:572px;width:100px">0</div>
<div class="c" style="left:682.5px">Tiền mặt</div>
<div class="a" style="left:804.5px;top:9.5px"><svg width="9" height="9" viewBox="0 0 9 9"><path d="M6.3 1.2l1.5 1.5-4.6 4.6-2 .5.5-2z" fill="none" stroke="#9f9bf0" stroke-width=".8"/></svg></div>
<div class="c" style="left:818.5px;color:#6b66e3;font-size:8.8px">Sửa</div>
<svg class="a" style="left:840.5px;top:11.5px" width="8" height="6" viewBox="0 0 8 6"><path d="M1 1.5l3 3 3-3" stroke="#8884ea" stroke-width="1" fill="none"/></svg>
</div>
</div>
<div class="a" style="left:1003px;top:116px;width:4.3px;height:288px;border-radius:2px;background:#9ca1ab"></div>
<div class="a" style="left:145px;top:581px;width:857px;height:19.5px;background:#e5e7eb"></div>
<div class="a r" style="left:626px;top:580.5px;width:100px;font-size:9.8px;font-weight:700;color:#1f2633;line-height:20px;text-align:right">2.670.000</div>
<div class="a r" style="left:717px;top:580.5px;width:100px;font-size:9.8px;font-weight:700;color:#1f2633;line-height:20px;text-align:right">2.670.000</div>
<div class="a" style="left:146.5px;top:602px;width:496px;height:4px;border-radius:2px;background:#8f95a0"></div>
<div class="a" style="left:145.5px;top:610px;font-size:9.2px;color:#3b414d;line-height:20px">Tổng số:</div>
<div class="a" style="left:188px;top:610px;font-size:9.2px;font-weight:700;color:#1f2633;line-height:20px">26</div>
<div class="a" style="left:749.5px;top:610px;font-size:9.2px;color:#3b414d;line-height:20px">Số bản ghi trên trang</div>
<div class="a" style="left:846.5px;top:610.5px;width:46px;height:20.5px;border:1px solid #e1e4e9;border-radius:4px;background:#fff"></div>
<div class="a" style="left:856.5px;top:610.5px;font-size:9.2px;color:#2f3541;line-height:20.5px">50</div>
<svg class="a" style="left:878px;top:618.5px" width="7" height="5" viewBox="0 0 7 5"><path d="M1 1l2.5 2.5L6 1" stroke="#6b717c" stroke-width=".9" fill="none"/></svg>
<div class="a" style="left:903px;top:610px;font-size:9.2px;color:#2f3541;line-height:20px">1 - 1</div>
<svg class="a" style="left:934.5px;top:616.5px" width="7" height="7" viewBox="0 0 7 7"><path d="M1 1v5M5.5 1L3 3.5 5.5 6" stroke="#7d838e" stroke-width=".9" fill="none"/></svg>
<svg class="a" style="left:955px;top:616.5px" width="5" height="7" viewBox="0 0 5 7"><path d="M3.5 1L1.5 3.5 3.5 6" stroke="#7d838e" stroke-width=".9" fill="none"/></svg>
<svg class="a" style="left:975.5px;top:616.5px" width="5" height="7" viewBox="0 0 5 7"><path d="M1.5 1L3.5 3.5 1.5 6" stroke="#7d838e" stroke-width=".9" fill="none"/></svg>
<svg class="a" style="left:995px;top:616.5px" width="7" height="7" viewBox="0 0 7 7"><path d="M6 1v5M1.5 1L4 3.5 1.5 6" stroke="#7d838e" stroke-width=".9" fill="none"/></svg>
<div class="a" style="left:523.5px;top:641px;font-size:8.5px;color:#2f3541;line-height:14px">Tìm hiểu thêm về <span style="color:#5b55da">Nhập kho.</span></div>
<div class="a" style="left:922.5px;top:91.5px;width:87.5px;height:24.5px;border-radius:4px;background:#e2e6fb;box-shadow:0 2px 4px rgba(0,0,0,.22)"></div>
<div class="a" style="left:927.5px;top:91.5px;font-size:9.2px;color:#6a64dc;line-height:24.5px">Nhập khẩu</div>
<div class="a" style="left:917.2px;top:85.8px;width:96.8px;height:38.2px;border:2.8px solid #e31b1b"></div>
<div class="a" style="left:1014.5px;top:420px;width:10px;height:20px;border-radius:3px 0 0 3px;background:#1a73e8"></div>
<svg class="a" style="left:1017px;top:426.5px" width="5" height="7" viewBox="0 0 5 7"><path d="M1.2 1l2.5 2.5L1.2 6" stroke="#fff" stroke-width=".9" fill="none"/></svg>
<div class="a" style="left:990px;top:440.5px;width:40px;height:95.5px;border-radius:8px;background:#fff;box-shadow:0 1px 3px rgba(0,0,0,.06)"></div>
<svg class="a" style="left:994px;top:445px" width="26" height="26" viewBox="0 0 26 26"><circle cx="13" cy="12.6" r="12.4" fill="#1f6fe5"/><g transform="rotate(-22 13 13) translate(2.2 2.2) scale(.83)"><path d="M6.5 11.2h3.2l6.5-3.6v10.8l-6.5-3.6H6.5z" fill="#fff"/><path d="M8.2 14.8l1.2 3.6h1.9l-.6-3.6z" fill="#fff"/><path d="M18.3 10l1.6-.9M18.6 13h1.9M18.3 16l1.6.9" stroke="#fff" stroke-width="1.1"/></g></svg>
<svg class="a" style="left:994px;top:476px" width="26" height="26" viewBox="0 0 26 26"><defs><linearGradient id="gg" x1="0" y1="0" x2="0" y2="1"><stop offset="0" stop-color="#2bd07c"/><stop offset="1" stop-color="#179a5b"/></linearGradient></defs><circle cx="13" cy="12.6" r="12.3" fill="url(#gg)"/><circle cx="13" cy="13" r="6.2" fill="#fff"/><circle cx="13" cy="13" r="4.2" fill="#25b46e"/><circle cx="11.5" cy="13" r=".9" fill="#e8fff2"/><circle cx="14.5" cy="13" r=".9" fill="#e8fff2"/></svg>
<svg class="a" style="left:994px;top:507.5px" width="26" height="26" viewBox="0 0 26 26"><circle cx="13" cy="12.8" r="12.3" fill="#1538cc"/><circle cx="6.6" cy="8.4" r="2.4" fill="#dfe5f3"/><circle cx="19.4" cy="8.4" r="2.4" fill="#dfe5f3"/><ellipse cx="13" cy="13.4" rx="8.6" ry="6.4" fill="#e3e8f5"/><rect x="6.4" y="10.6" width="13.2" height="6.4" rx="3.2" fill="#1c2850"/><circle cx="9.9" cy="13.8" r="1.5" fill="#aebfff"/><circle cx="16.1" cy="13.8" r="1.5" fill="#aebfff"/></svg>
</body></html>
